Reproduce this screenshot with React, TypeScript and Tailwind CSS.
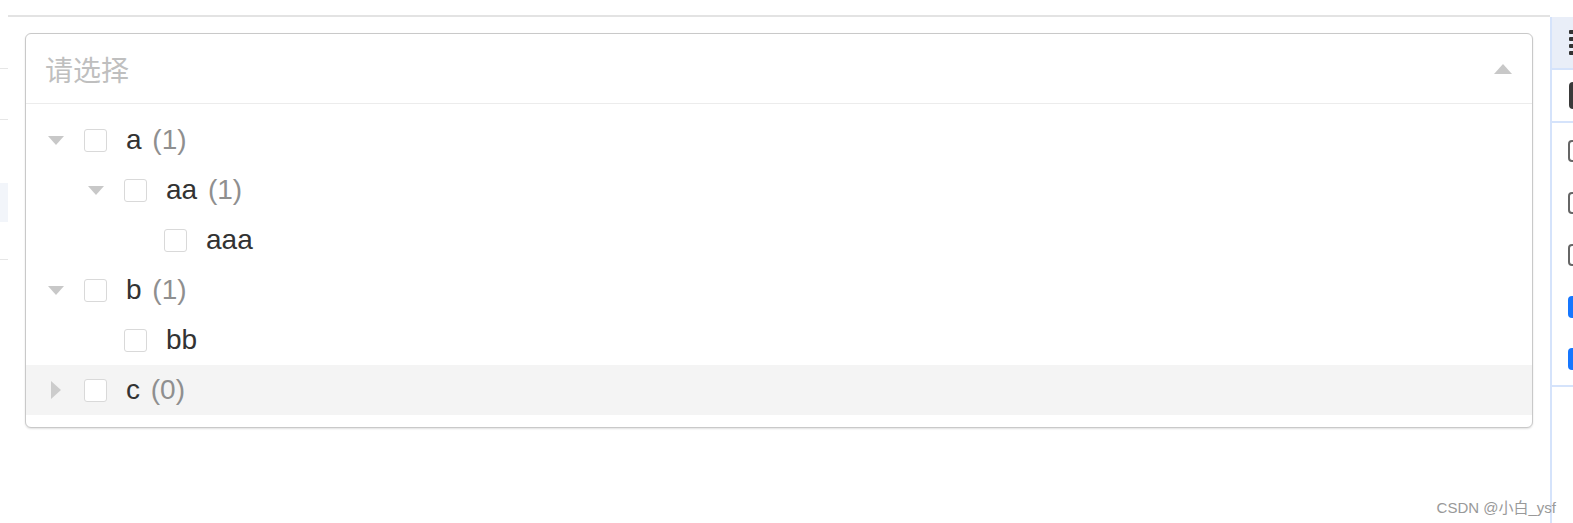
import React from 'react';

type Node = {
  label: string;
  count?: number;
  level: number;
  arrow?: 'down' | 'right';
  active?: boolean;
};

const nodes: Node[] = [
  { label: 'a', count: 1, level: 0, arrow: 'down' },
  { label: 'aa', count: 1, level: 1, arrow: 'down' },
  { label: 'aaa', level: 2 },
  { label: 'b', count: 1, level: 0, arrow: 'down' },
  { label: 'bb', level: 1 },
  { label: 'c', count: 0, level: 0, arrow: 'right', active: true },
];

const indent = ['pl-[22px]', 'pl-[62px]', 'pl-[102px]'];

function Arrow({ dir }: { dir?: 'down' | 'right' }) {
  return (
    <span className="w-[16px] h-[18px] flex items-center justify-center shrink-0">
      {dir === 'down' && (
        <svg width="16" height="9" viewBox="0 0 16 9">
          <polygon points="0,0 16,0 8,9" fill="#c8c8c8" />
        </svg>
      )}
      {dir === 'right' && (
        <svg width="10" height="18" viewBox="0 0 10 18">
          <polygon points="0,0 10,9 0,18" fill="#cccccc" />
        </svg>
      )}
    </span>
  );
}

function TreeRow({ node }: { node: Node }) {
  return (
    <div
      className={`h-[50px] flex items-center ${indent[node.level]} ${
        node.active ? 'bg-[#f4f4f4]' : ''
      }`}
    >
      <Arrow dir={node.arrow} />
      <span className="ml-[20px] w-[23px] h-[23px] rounded-[3px] border border-[#d9d9d9] bg-white shrink-0" />
      <span className="ml-[19px] text-[28px] leading-none text-[#333]">
        {node.label}
        {node.count !== undefined && (
          <span className="ml-[3px] text-[#8f8f8f]"> ({node.count})</span>
        )}
      </span>
    </div>
  );
}

function SidePanel() {
  return (
    <div className="w-[23px] mt-[17px] border-l-2 border-[#d5e3fb] flex flex-col">
      <div className="h-[53px] bg-[#e9eef8] border-b-2 border-[#d5e3fb] flex items-center pl-[17px]">
        <div className="flex flex-col gap-[3px]">
          <span className="w-[6px] h-[4px] bg-[#333] rounded-[1px]" />
          <span className="w-[6px] h-[4px] bg-[#333] rounded-[1px]" />
          <span className="w-[6px] h-[4px] bg-[#333] rounded-[1px]" />
          <span className="w-[6px] h-[4px] bg-[#333] rounded-[1px]" />
        </div>
      </div>
      <div className="h-[53px] border-b-2 border-[#d5e3fb] flex items-center pl-[17px]">
        <span className="w-[24px] h-[27px] rounded-[4px] bg-[#3a3a3a] shrink-0" />
      </div>
      <div className="flex flex-col border-b-2 border-[#d5e3fb] pt-[2px]">
        {['gray', 'gray', 'gray', 'blue', 'blue'].map((c, i) => (
          <div key={i} className="h-[52px] flex items-center pl-[16px]">
            <span
              className={`w-[22px] h-[22px] rounded-[4px] shrink-0 ${
                c === 'blue' ? 'bg-[#1677ff]' : 'border-2 border-[#666]'
              }`}
            />
          </div>
        ))}
      </div>
    </div>
  );
}

export default function App() {
  return (
    <div className="relative w-[1573px] h-[523px] bg-white flex overflow-hidden font-['Liberation_Sans','Noto_Sans_CJK_SC',sans-serif]">
      {/* left stub */}
      <div className="w-[8px] flex flex-col shrink-0">
        <div className="h-[68px]" />
        <div className="h-px bg-[#e6e6e6]" />
        <div className="h-[50px]" />
        <div className="h-px bg-[#e6e6e6]" />
        <div className="h-[63px]" />
        <div className="h-[39px] bg-[#f2f5fa]" />
        <div className="h-[37px]" />
        <div className="h-px bg-[#e6e6e6]" />
      </div>

      {/* main */}
      <div className="flex-1 mt-[15px] border-t-2 border-[#e3e3e3] px-[17px] pt-[16px]">
        <div className="rounded-[6px] border border-[#c9c9c9] bg-white shadow-[0_1px_2px_rgba(0,0,0,0.12)]">
          <div className="h-[70px] flex items-center justify-between pl-[19px] pr-[20px] border-b border-[#ececec]">
            <span className="text-[28px] leading-none text-[#bfbfbf] font-['Noto_Sans_CJK_SC',sans-serif]">
              请选择
            </span>
            <svg width="18" height="10" viewBox="0 0 18 10">
              <polygon points="9,0 18,10 0,10" fill="#c8c8c8" />
            </svg>
          </div>
          <div className="pt-[11px] pb-[12px]">
            {nodes.map((n) => (
              <TreeRow key={n.label} node={n} />
            ))}
          </div>
        </div>
      </div>

      <SidePanel />

      <span className="absolute right-[17px] bottom-[8px] text-[15px] leading-none text-[#999]">
        CSDN @小白_ysf
      </span>
    </div>
  );
}
